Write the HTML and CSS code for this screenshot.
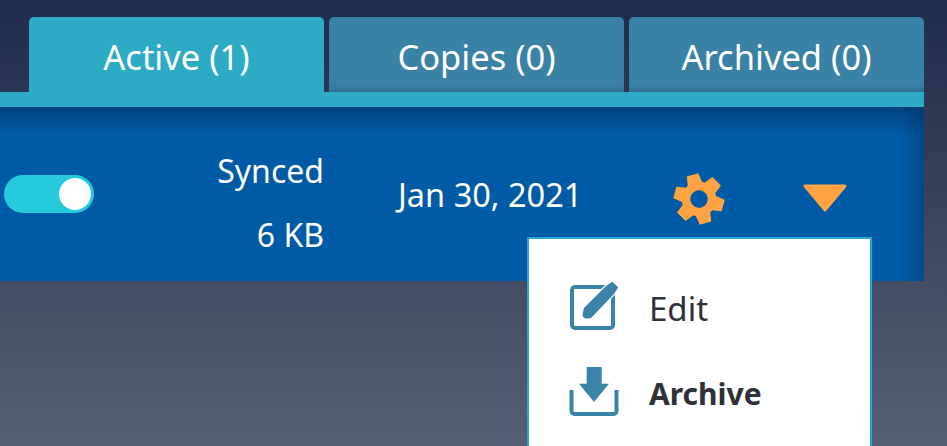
FILE: index.html
```html
<!DOCTYPE html>
<html lang="en">
<head>
    <meta charset="UTF-8">
    <title>Active items</title>
    <link rel="stylesheet" href="styles.css">
</head>
<body>
    <div class="tabs">
        <div class="tab active">Active (1)</div>
        <div class="tab">Copies (0)</div>
        <div class="tab">Archived (0)</div>
    </div>
    <div class="panel">
        <div class="row">
            <div class="toggle"><span class="knob"></span></div>
            <div class="status">
                <div>Synced</div>
                <div>6 KB</div>
            </div>
            <div class="date">Jan 30, 2021</div>
            <div class="gear">
                <svg width="52" height="52" viewBox="-26 -26 52 52">
                    <g transform="rotate(-15)" fill="#ffa343">
                        <circle r="13" fill="none" stroke="#ffa343" stroke-width="8.500"/>
                        <path id="tooth" d="M-7.500 -15 L-6 -25 H6 L7.500 -15Z"/>
                        <use href="#tooth" transform="rotate(60)"/>
                        <use href="#tooth" transform="rotate(120)"/>
                        <use href="#tooth" transform="rotate(180)"/>
                        <use href="#tooth" transform="rotate(240)"/>
                        <use href="#tooth" transform="rotate(300)"/>
                    </g>
                </svg>
            </div>
            <div class="caret">
                <svg width="46" height="30" viewBox="0 0 46 30">
                    <path d="M3 3H43L23 27Z" fill="#ffa343" stroke="#ffa343" stroke-width="3" stroke-linejoin="round"/>
                </svg>
            </div>
        </div>
    </div>
    <div class="menu">
        <div class="menu-item">
            <svg class="menu-icon" width="50" height="50" viewBox="0 0 50 50">
                <rect x="3" y="4" width="41" height="41" rx="3" fill="none" stroke="#3a83a8" stroke-width="4"/>
                <path d="M43.300 -1.300L49.300 4.300 45 11 22 35C18 36 15 36 13.700 33 13.500 31 14 28 15 25L37 3Z" fill="#3a83a8" stroke="#fff" stroke-width="2.500" paint-order="stroke"/>
            </svg>
            <span>Edit</span>
        </div>
        <div class="menu-item bold">
            <svg class="menu-icon" width="50" height="50" viewBox="0 0 50 50">
                <path d="M2.500 22V43a3 3 0 0 0 3 3h39a3 3 0 0 0 3-3V22" fill="none" stroke="#3a83a8" stroke-width="4"/>
                <path d="M17.700 -1H32.700V15.700H40L25 34 10 15.700H17.700Z" fill="#3a83a8"/>
            </svg>
            <span>Archive</span>
        </div>
    </div>
</body>
</html>
```

FILE: styles.css
```css
html, body {
    height: 100%;
}

body {
    margin: 0;
    overflow: hidden;
    position: relative;
    padding-top: 17px;
    box-sizing: border-box;
    font-family: "Noto Sans", Arial, sans-serif;
    color: #fff;
    background: linear-gradient(#1f2c4a, #566075);
}

.tabs {
    display: flex;
    gap: 5px;
    margin: 0 23px 0 29px;
}

.tab {
    flex: 1;
    height: 75px;
    line-height: 79px;
    text-align: center;
    font-size: 34.500px;
    background: #3a81a6;
    border-radius: 5px 5px 0 0;
    box-shadow: inset 0 -8px 8px -8px rgba(0, 0, 0, 0.3);
}

    .tab.active {
        background: #2dabc4;
        box-shadow: none;
    }

.panel {
    margin-right: 23px;
    height: 174px;
    border-top: 15px solid #2dabc4;
    background: linear-gradient(#00437f, #005ba6 28px);
    position: relative;
}

    .panel::after {
        content: "";
        position: absolute;
        top: 0;
        right: 0;
        bottom: 0;
        width: 24px;
        background: linear-gradient(to right, rgba(0, 40, 80, 0), rgba(0, 40, 80, 0.35));
    }

.row {
    display: flex;
    align-items: center;
    height: 174px;
    padding-left: 4px;
    box-sizing: border-box;
}

.toggle {
    display: flex;
    justify-content: flex-end;
    align-items: center;
    width: 90px;
    height: 38px;
    padding-right: 3px;
    box-sizing: border-box;
    border-radius: 19px;
    background: #26cadd;
}

.knob {
    width: 32px;
    height: 32px;
    border-radius: 50%;
    background: #fff;
}

.status {
    width: 230px;
    font-size: 32px;
    line-height: 64px;
    text-align: right;
    margin-top: 18px;
}

.date {
    margin-left: 74px;
    width: 183px;
    white-space: nowrap;
    font-size: 32.500px;
}

.gear {
    margin-left: 92px;
    height: 52px;
    margin-top: 9px;
}

.caret {
    margin-left: 77px;
    height: 30px;
    margin-top: 8px;
}

.menu {
    position: absolute;
    left: 527px;
    top: 237px;
    bottom: 0;
    width: 345px;
    box-sizing: border-box;
    border: 2px solid #2aa5dc;
    border-bottom: 0;
    background: #fff;
    color: #2e3138;
    padding: 44px 0 0 40px;
    font-size: 33px;
}

.menu-item {
    display: flex;
    align-items: center;
    gap: 30px;
    height: 50px;
    margin-bottom: 33px;
}

    .menu-item.bold {
        font-weight: 700;
        font-size: 30px;
        padding-top: 2px;
    }

.menu-icon {
    overflow: visible;
}
```
